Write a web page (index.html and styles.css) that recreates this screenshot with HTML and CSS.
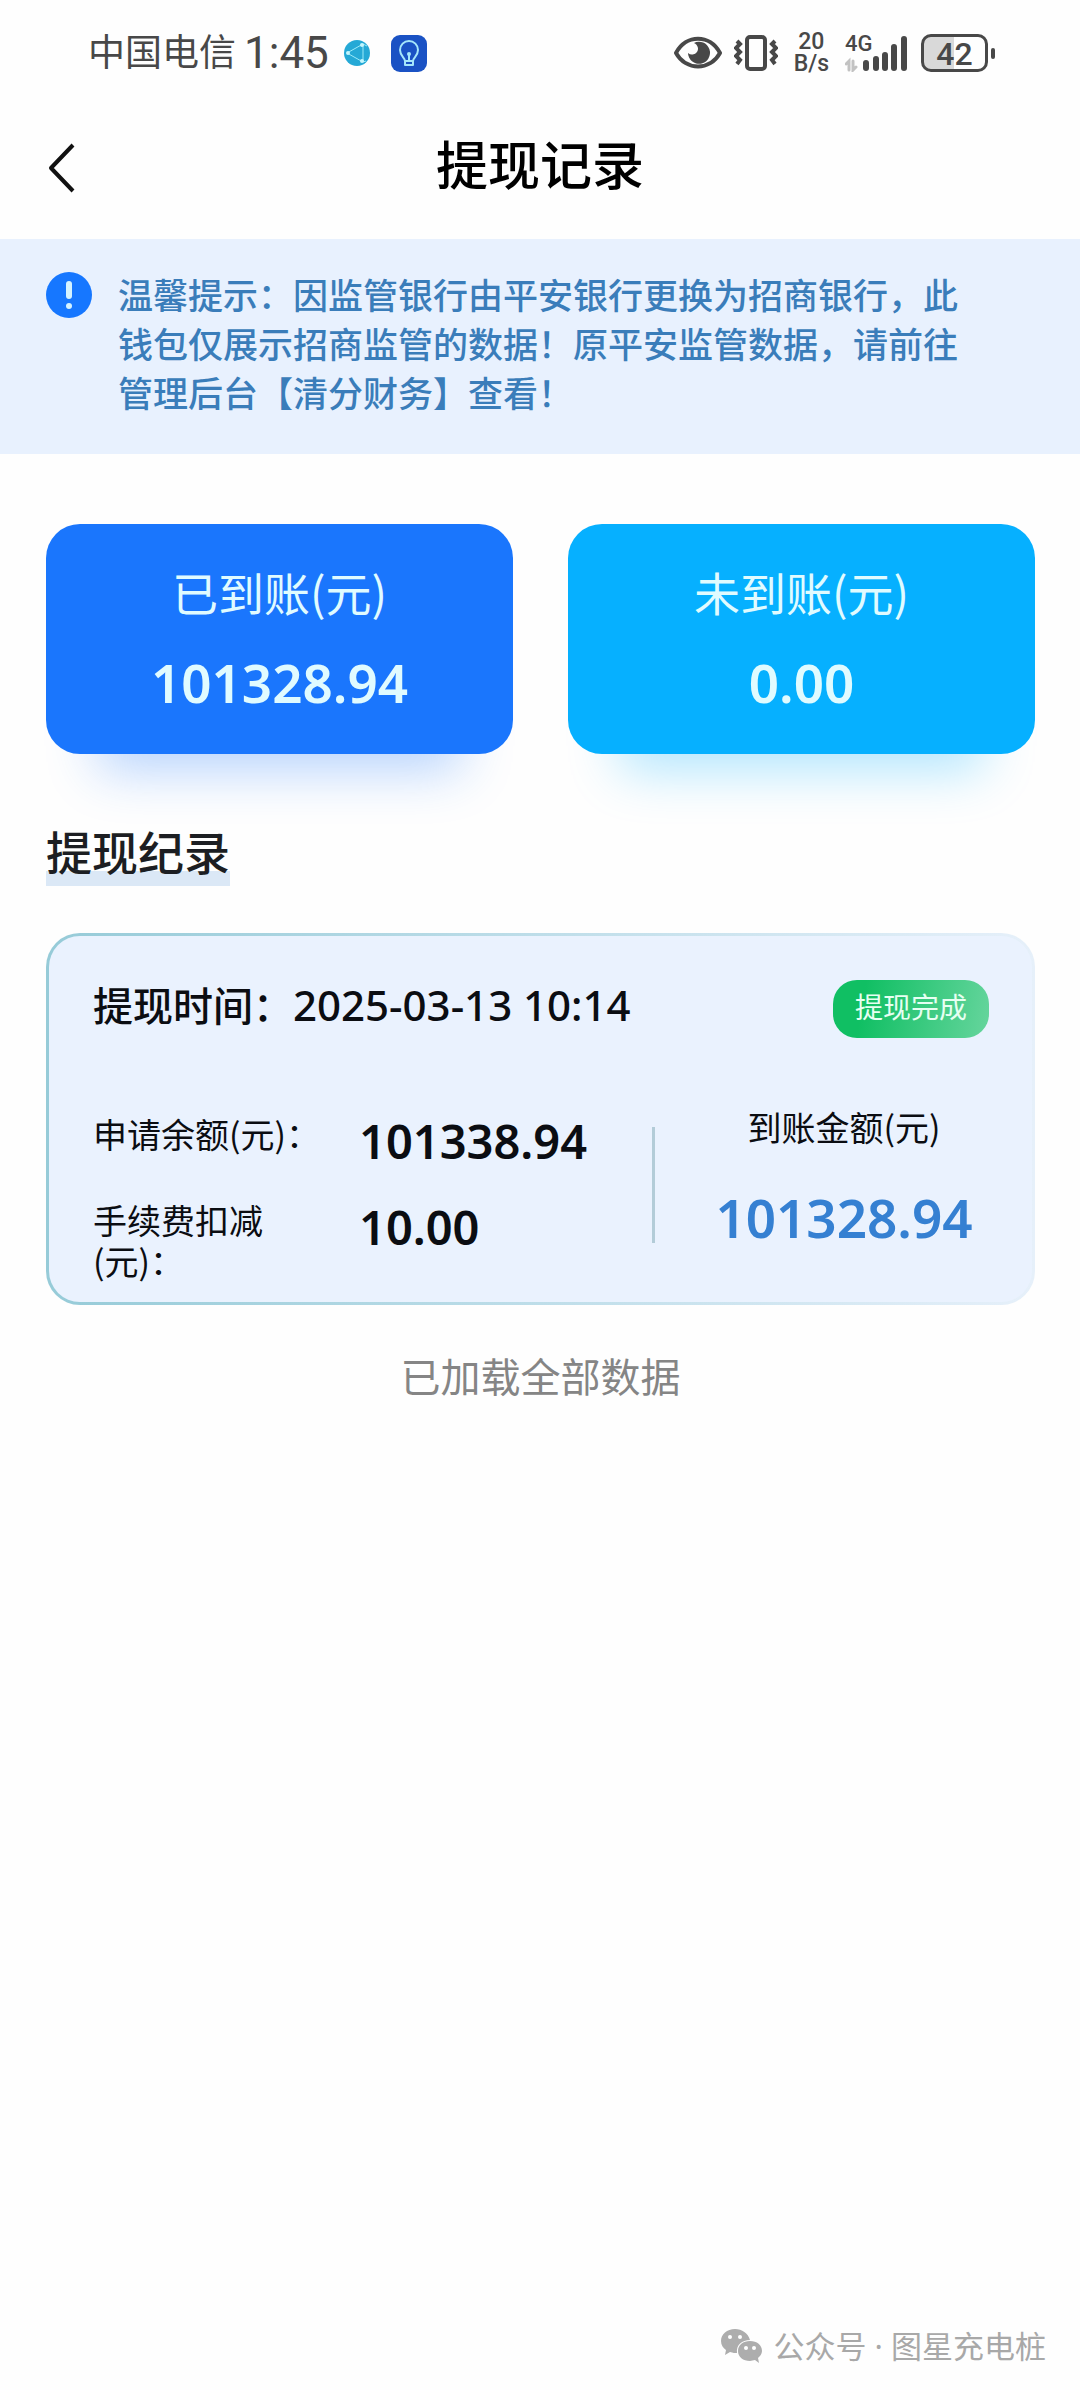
FILE: index.html
```html
<!DOCTYPE html>
<html lang="zh-CN">
<head>
<meta charset="utf-8">
<meta name="viewport" content="width=device-width, initial-scale=1">
<title>提现记录</title>
<link rel="stylesheet" href="styles.css">
</head>
<body>
<div class="status">
  <span class="carrier">中国电信</span>
  <span class="clock">1:45</span>
  <svg class="app-dot" width="28" height="28" viewBox="0 0 28 28" aria-hidden="true">
    <circle cx="14" cy="14" r="13" fill="#25a9d6"/>
    <path d="M4 14 20 5v18zM20 5l4 2M20 23l3-1" fill="none" stroke="#9beaf8" stroke-width="1"/>
    <circle cx="5" cy="14" r="2" fill="#c4f6fd"/><circle cx="19" cy="6" r="2" fill="#c4f6fd"/><circle cx="19" cy="22" r="2" fill="#c4f6fd"/>
  </svg>
  <svg class="app-bulb" width="36" height="37" viewBox="0 0 36 37" aria-hidden="true">
    <rect width="36" height="37" rx="9" fill="#1a52c4"/>
    <path d="M14 26c0-3-5-5-5-11a9 9 0 0 1 18 0c0 6-5 8-5 11zM14 26v4h8v-4M18 19v7" fill="none" stroke="#a5e6fb" stroke-width="2" stroke-linejoin="round"/>
    <circle cx="18" cy="19" r="2" fill="#a5e6fb"/>
  </svg>
  <div class="indicators">
    <svg width="48" height="34" viewBox="0 0 48 34" aria-hidden="true">
      <path d="M2 17C12-2 36-2 46 17 36 35 12 35 2 17z" fill="none" stroke="#484848" stroke-width="4" stroke-linejoin="round"/>
      <path d="M20 7a11 11 0 1 1-6 10 6 6 0 0 0 9-1c2-3 1-7-3-9z" fill="#484848"/>
    </svg>
    <svg class="vibrate" width="44" height="36" viewBox="0 0 44 36" fill="none" stroke="#484848" aria-hidden="true">
      <rect x="13" y="2" width="18" height="32" rx="3" stroke-width="4"/>
      <path d="M3 6l3 3-4 4 4 4-4 4 4 4-3 4M41 6l-3 3 4 4-4 4 4 4-4 4 3 4" stroke-width="4"/>
    </svg>
    <span class="speed"><span>20</span><span>B/s</span></span>
    <span class="network">
      <span class="net-type">4G</span>
      <svg width="62" height="37" viewBox="0 0 62 37" stroke="#484848" stroke-width="6" stroke-linecap="round" aria-hidden="true">
        <path d="M21 28v5M31 24v9M40 20v13M49 12v21M59 4v29"/>
        <path d="M1 29l3-3v9M8 26v9l3-3" fill="none" stroke="#c2c2c2" stroke-width="3"/>
      </svg>
    </span>
    <span class="battery">42</span>
    <span class="battery-tip"></span>
  </div>
</div>

<header class="header">
  <button class="back" type="button" aria-label="返回">
    <svg width="28" height="52" viewBox="0 0 28 52" aria-hidden="true"><path d="M25 3 3 26l22 23" fill="none" stroke="#111" stroke-width="4" stroke-linejoin="round"/></svg>
  </button>
  <h1 class="title">提现记录</h1>
</header>

<section class="notice">
  <svg class="notice-icon" width="46" height="46" viewBox="0 0 46 46" aria-hidden="true">
    <circle cx="23" cy="23" r="23" fill="#1677ff"/>
    <path d="M23 12v12" stroke="#d5f3ff" stroke-width="6" stroke-linecap="round"/>
    <circle cx="23" cy="34" r="3" fill="#d5f3ff"/>
  </svg>
  <p class="notice-text">温馨提示：因监管银行由平安银行更换为招商银行，此钱包仅展示招商监管的数据！原平安监管数据，请前往管理后台【清分财务】查看！</p>
</section>

<main class="content">
  <section class="totals">
    <div class="total total-paid">
      <span class="total-label">已到账(元)</span>
      <span class="amount">101328.94</span>
    </div>
    <div class="total total-pending">
      <span class="total-label">未到账(元)</span>
      <span class="amount">0.00</span>
    </div>
  </section>

  <h2 class="section-title">提现纪录</h2>

  <article class="record">
    <div class="record-head">
      <span class="record-time">提现时间：<time class="date" datetime="2025-03-13T10:14">2025-03-13 10:14</time></span>
      <span class="badge">提现完成</span>
    </div>
    <div class="record-body">
      <dl class="details">
        <dt>申请余额(元)：</dt>
        <dd>101338.94</dd>
        <dt>手续费扣减(元)：</dt>
        <dd>10.00</dd>
      </dl>
      <span class="divider"></span>
      <div class="received">
        <span class="received-label">到账金额(元)</span>
        <span class="amount amount-blue">101328.94</span>
      </div>
    </div>
  </article>

  <p class="end">已加载全部数据</p>
</main>

<footer class="source">
  <svg width="41" height="34" viewBox="0 0 41 34" aria-hidden="true">
    <path d="M14 0C6 0 0 5 0 12c0 4 2 7 5 9l-1 5 5-3c3 1 5 1 7 1-1-8 5-13 13-13C27 4 21 0 14 0z" fill="#adadad"/>
    <path d="M29 12c-7 0-12 4-12 10s5 10 12 10l5-1 4 3-1-5c2-2 4-4 4-7 0-6-5-10-12-10z" fill="#adadad"/>
    <g fill="#fff"><circle cx="9" cy="8" r="2"/><circle cx="19" cy="8" r="2"/><circle cx="25" cy="19" r="2"/><circle cx="33" cy="19" r="2"/></g>
  </svg>
  <span>公众号 · 图星充电桩</span>
</footer>
</body>
</html>
```
FILE: styles.css
```css
* {
  box-sizing: border-box;
}

body {
  margin: 0;
  min-height: 100vh;
  display: flex;
  flex-direction: column;
  background: #fefefe;
  color: #0b0d12;
  font-family: "Noto Sans CJK SC", "Noto Sans", sans-serif;
}

h1,
h2,
p,
dl,
dd {
  margin: 0;
}

/* Phone status bar */
.status {
  display: flex;
  align-items: center;
  height: 106px;
  padding: 0 85px 0 88px;
  color: #484848;
  white-space: nowrap;
}

.carrier {
  padding-bottom: 6px;
  font-size: 37px;
  line-height: 44px;
}

.clock,
.speed,
.net-type,
.battery {
  font-family: Roboto, sans-serif;
}

.clock {
  margin-left: 8px;
  font-size: 44px;
  line-height: 44px;
}

.app-dot {
  margin-left: 14px;
}

.app-bulb {
  margin-left: 20px;
}

.indicators {
  display: flex;
  align-items: center;
  margin-left: auto;
}

.vibrate {
  margin-left: 12px;
}

.speed {
  display: flex;
  flex-direction: column;
  align-items: center;
  margin-left: 16px;
  font-size: 23px;
  font-weight: 500;
  line-height: 22px;
}

.network {
  position: relative;
  display: flex;
  margin-left: 16px;
}

.net-type {
  position: absolute;
  top: -2px;
  left: 0;
  font-size: 22px;
  font-weight: 500;
  line-height: 22px;
}

.battery {
  width: 67px;
  height: 38px;
  margin-left: 14px;
  border: 3px solid #484848;
  border-radius: 10px;
  background: linear-gradient(90deg, #d9d9d9 50%, #fefefe 50%);
  font-size: 32px;
  font-weight: 500;
  line-height: 34px;
  text-align: center;
}

.battery-tip {
  width: 4px;
  height: 11px;
  margin-left: 3px;
  border-radius: 2px;
  background: #484848;
}

/* Page header */
.header {
  display: grid;
  grid-template-columns: 80px 1fr 80px;
  align-items: center;
  padding: 24px 0 33px;
}

.back {
  display: flex;
  justify-content: flex-end;
  padding: 0 4px;
  border: 0;
  background: none;
  cursor: pointer;
}

.title {
  padding-bottom: 10px;
  color: #000;
  font-size: 52px;
  font-weight: 500;
  line-height: 66px;
  text-align: center;
}

/* Notice */
.notice {
  display: flex;
  align-items: flex-start;
  gap: 26px;
  padding: 30px 92px 38px 46px;
  background: #e8f1fe;
}

.notice-icon {
  flex: none;
  margin-top: 3px;
}

.notice-text {
  color: #3a7dba;
  font-size: 35px;
  font-weight: 500;
  line-height: 49px;
}

/* Totals */
.content {
  padding: 70px 45px 0 46px;
}

.totals {
  display: grid;
  grid-template-columns: 1fr 1fr;
  gap: 55px;
}

.total {
  display: flex;
  flex-direction: column;
  align-items: center;
  gap: 24px;
  padding: 33px 0 37px;
  border-radius: 34px;
  color: #e0fbff;
}

.total-paid {
  background: #1a76fd;
  box-shadow: 0 68px 52px -52px #1a76fd50;
}

.total-pending {
  background: #06b0ff;
  box-shadow: 0 68px 52px -52px #06b0ff50;
}

.total-label {
  font-size: 46px;
  line-height: 68px;
}

.amount {
  font-family: "Noto Sans", sans-serif;
  font-size: 53px;
  font-weight: 600;
  line-height: 68px;
}

.amount-blue {
  color: #3580d2;
}

.section-title {
  width: fit-content;
  margin-top: 63px;
  padding-bottom: 3px;
  background: linear-gradient(#fff0 78%, #dbe8f6 78%);
  color: #1c1e22;
  font-size: 46px;
  font-weight: 500;
  line-height: 66px;
}

/* Withdrawal record */
.record {
  margin-top: 47px;
  padding: 43px 43px 21px 44px;
  border: 3px solid transparent;
  border-radius: 34px;
  background:
    linear-gradient(#eaf2fe, #eaf2fe) padding-box,
    linear-gradient(90deg, #96cbd8, #e6f0fa) border-box;
}

.record-head {
  display: flex;
  align-items: center;
  justify-content: space-between;
}

.record-time {
  padding-bottom: 8px;
  font-size: 40px;
  font-weight: 500;
  line-height: 50px;
  white-space: nowrap;
}

.date {
  font-family: "Noto Sans", sans-serif;
  font-size: 42px;
}

.badge {
  padding: 0 22px 6px;
  border-radius: 24px;
  background: linear-gradient(100deg, #10bf63 20%, #66d59d);
  color: #e6fff2;
  font-size: 28px;
  line-height: 52px;
}

.record-body {
  display: flex;
  align-items: flex-start;
  margin-top: 68px;
}

.details {
  display: grid;
  flex: 1;
  grid-template-columns: 240px auto;
  justify-content: start;
  column-gap: 26px;
  row-gap: 26px;
  padding-top: 5px;
  font-size: 34px;
  line-height: 41px;
}

.details dt {
  padding-top: 2px;
}

.details dd {
  font-family: "Noto Sans", sans-serif;
  font-size: 47px;
  font-weight: 600;
  line-height: 60px;
}

.divider {
  width: 3px;
  height: 116px;
  margin-top: 21px;
  background: #b3ccd8;
}

.received {
  display: flex;
  flex-direction: column;
  align-items: center;
  gap: 36px;
  width: 334px;
  padding-left: 44px;
}

.received-label {
  font-size: 34px;
  line-height: 42px;
}

.end {
  margin-top: 41px;
  color: #858585;
  font-size: 40px;
  line-height: 58px;
  text-align: center;
}

/* Account line at the foot */
.source {
  display: flex;
  align-items: center;
  justify-content: flex-end;
  gap: 12px;
  margin-top: auto;
  padding: 0 34px 21px 0;
  color: #a8a8a8;
  font-family: "Noto Sans", "Noto Sans CJK SC", sans-serif;
  font-size: 31px;
  line-height: 46px;
}
```
